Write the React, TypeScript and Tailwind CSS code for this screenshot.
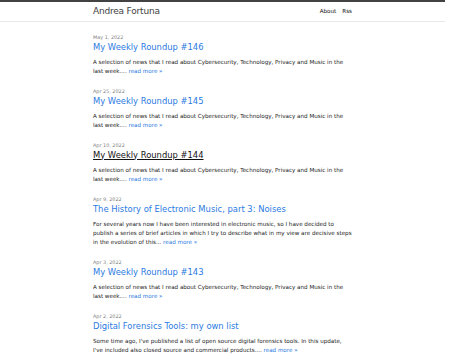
const posts = [
  {
    date: "May 1, 2022",
    title: "My Weekly Roundup #146",
    excerpt:
      "A selection of news that I read about Cybersecurity, Technology, Privacy and Music in the last week....",
  },
  {
    date: "Apr 25, 2022",
    title: "My Weekly Roundup #145",
    excerpt:
      "A selection of news that I read about Cybersecurity, Technology, Privacy and Music in the last week....",
  },
  {
    date: "Apr 10, 2022",
    title: "My Weekly Roundup #144",
    excerpt:
      "A selection of news that I read about Cybersecurity, Technology, Privacy and Music in the last week....",
    hover: true,
  },
  {
    date: "Apr 9, 2022",
    title: "The History of Electronic Music, part 3: Noises",
    excerpt:
      "For several years now I have been interested in electronic music, so I have decided to publish a series of brief articles in which I try to describe what in my view are decisive steps in the evolution of this...",
  },
  {
    date: "Apr 3, 2022",
    title: "My Weekly Roundup #143",
    excerpt:
      "A selection of news that I read about Cybersecurity, Technology, Privacy and Music in the last week....",
  },
  {
    date: "Apr 2, 2022",
    title: "Digital Forensics Tools: my own list",
    excerpt:
      "Some time ago, I've published a list of open source digital forensics tools. In this update, I've included also closed source and commercial products....",
  },
];

const App = () => {
  return (
    <div className="w-[445px] min-h-[360px] bg-white font-['DejaVu_Sans',sans-serif] text-[#111]">
      <header className="border-t-2 border-[#424242] border-b border-b-[#e8e8e8]">
        <div className="ml-[93px] w-[260px] h-[19px] flex items-center justify-between">
          <a className="text-[9px] tracking-[-0.2px] text-[#424242]">Andrea Fortuna</a>
          <nav className="flex gap-[6px] pr-[1px] text-[5.6px] text-[#111]">
            <a>About</a>
            <a>Rss</a>
          </nav>
        </div>
      </header>
      <main className="ml-[93px] w-[260px] pt-[10.5px]">
        <ul className="flex flex-col gap-[11px]">
          {posts.map((p) => (
            <li key={p.title} className="flex flex-col">
              <span className="text-[4.9px] leading-[8px] text-[#828282]">{p.date}</span>
              <h3
                className={
                  "text-[8.4px] leading-[12px] mb-[5px] " +
                  (p.hover ? "text-[#111] underline" : "text-[#2a7ae2]")
                }
              >
                {p.title}
              </h3>
              <p className="text-[5.6px] leading-[9px] text-[#222]">
                {p.excerpt} <a className="text-[#2a7ae2]">read more »</a>
              </p>
            </li>
          ))}
        </ul>
      </main>
    </div>
  );
};

export default App;
